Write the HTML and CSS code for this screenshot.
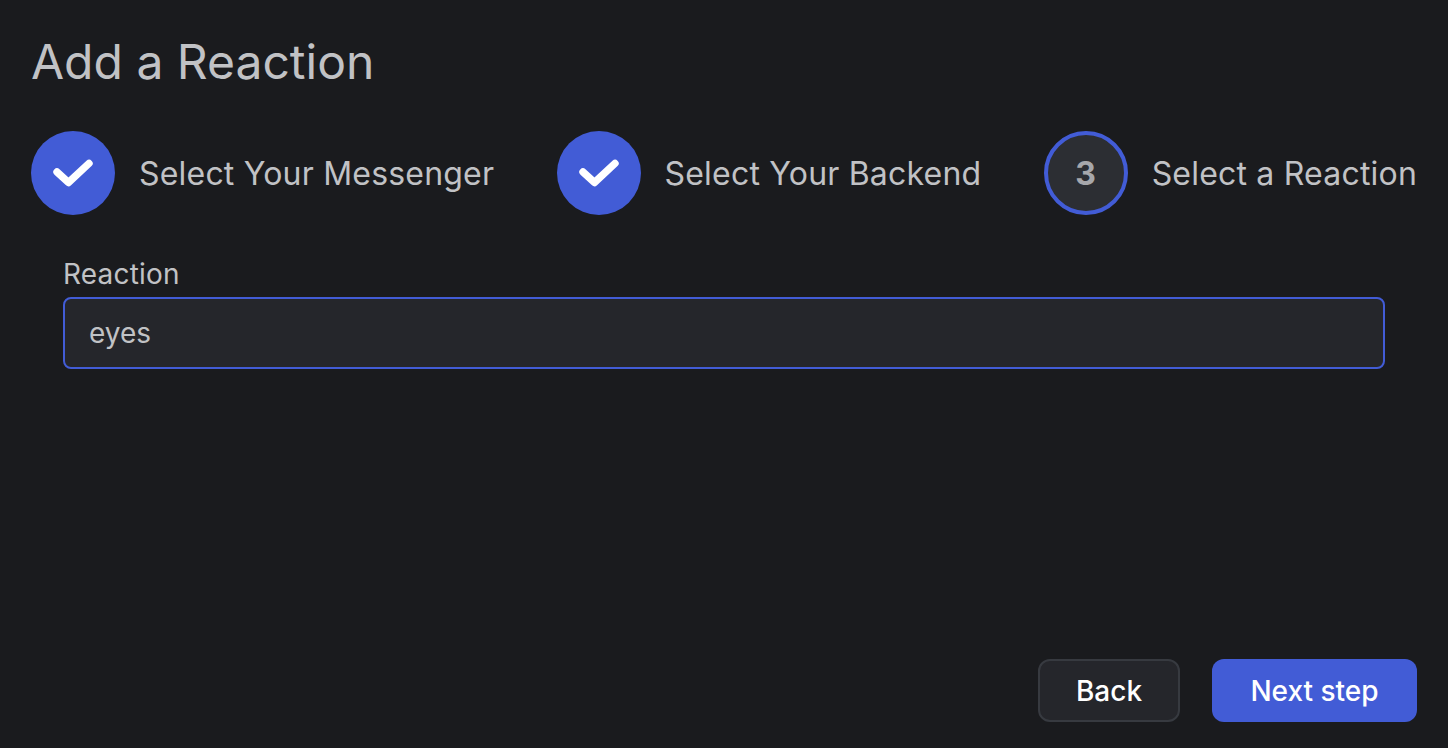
FILE: index.html
```html
<!DOCTYPE html>
<html lang="en">
<head>
<meta charset="utf-8">
<title>Add a Reaction</title>
<link rel="stylesheet" href="styles.css">
</head>
<body>
<main class="page">
  <h1 class="title">Add a Reaction</h1>
  <div class="stepper">
    <div class="step">
      <div class="circle done">
        <svg class="check" viewBox="0 0 40 28" width="40" height="28"><path d="M4 13 L15.5 23.5 L36 4.4" fill="none" stroke="#fff" stroke-width="7.4" stroke-linecap="round" stroke-linejoin="round"/></svg>
      </div>
      <span class="step-label">Select Your Messenger</span>
    </div>
    <div class="step">
      <div class="circle done">
        <svg class="check" viewBox="0 0 40 28" width="40" height="28"><path d="M4 13 L15.5 23.5 L36 4.4" fill="none" stroke="#fff" stroke-width="7.4" stroke-linecap="round" stroke-linejoin="round"/></svg>
      </div>
      <span class="step-label">Select Your Backend</span>
    </div>
    <div class="step">
      <div class="circle active">3</div>
      <span class="step-label">Select a Reaction</span>
    </div>
  </div>
  <div class="field">
    <label class="field-label" for="reaction">Reaction</label>
    <input class="input" id="reaction" type="text" value="eyes">
  </div>
  <div class="actions">
    <button class="btn btn-back" type="button">Back</button>
    <button class="btn btn-next" type="button">Next step</button>
  </div>
</main>
</body>
</html>
```
FILE: styles.css
```css
* { box-sizing: border-box; }
html, body { margin: 0; height: 100%; }
body {
  background: #1a1b1e;
  font-family: Inter, "Noto Sans", sans-serif;
  color: #c1c2c5;
  overflow: hidden;
}
.page {
  height: 748px;
  padding: 32px 31px 26px 31px;
  display: flex;
  flex-direction: column;
}
.title {
  margin: 0;
  font-size: 48px;
  font-weight: 400;
  line-height: 60px;
  color: #c1c2c5;
}
.stepper {
  margin-top: 39px;
  display: flex;
  justify-content: space-between;
}
.step {
  display: flex;
  align-items: center;
  gap: 24px;
}
.circle {
  width: 84px;
  height: 84px;
  border-radius: 50%;
  display: flex;
  align-items: center;
  justify-content: center;
  flex: none;
}
.done { background: #425cd6; }
.active {
  background: #2c2e33;
  border: 4px solid #425cd6;
  font-size: 32px;
  font-weight: 700;
  color: #a6a7ab;
}
.step-label {
  font-size: 32px;
  line-height: 40px;
  padding-top: 2px;
  letter-spacing: 0.2px;
  white-space: nowrap;
}
.field {
  margin: 41px 32px 0 32px;
  display: flex;
  flex-direction: column;
}
.field-label {
  font-size: 28px;
  line-height: 36px;
  font-weight: 400;
  letter-spacing: 0.2px;
  color: #c1c2c5;
  margin-bottom: 5px;
}
.input {
  width: 100%;
  height: 72px;
  background: #25262b;
  border: 2px solid #425cd6;
  border-radius: 8px;
  padding: 0 24px;
  font: 400 28px Inter, "Noto Sans", sans-serif;
  color: #c1c2c5;
  outline: none;
}
.actions {
  margin-top: auto;
  display: flex;
  justify-content: flex-end;
  gap: 32px;
}
.btn {
  height: 63px;
  border-radius: 12px;
  font: 500 28px Inter, "Noto Sans", sans-serif;
  color: #fff;
  padding: 0;
}
.btn-back {
  width: 142px;
  background: #25262b;
  border: 2px solid #373a40;
}
.btn-next {
  width: 205px;
  background: #425cd6;
  border: 0;
}
```
